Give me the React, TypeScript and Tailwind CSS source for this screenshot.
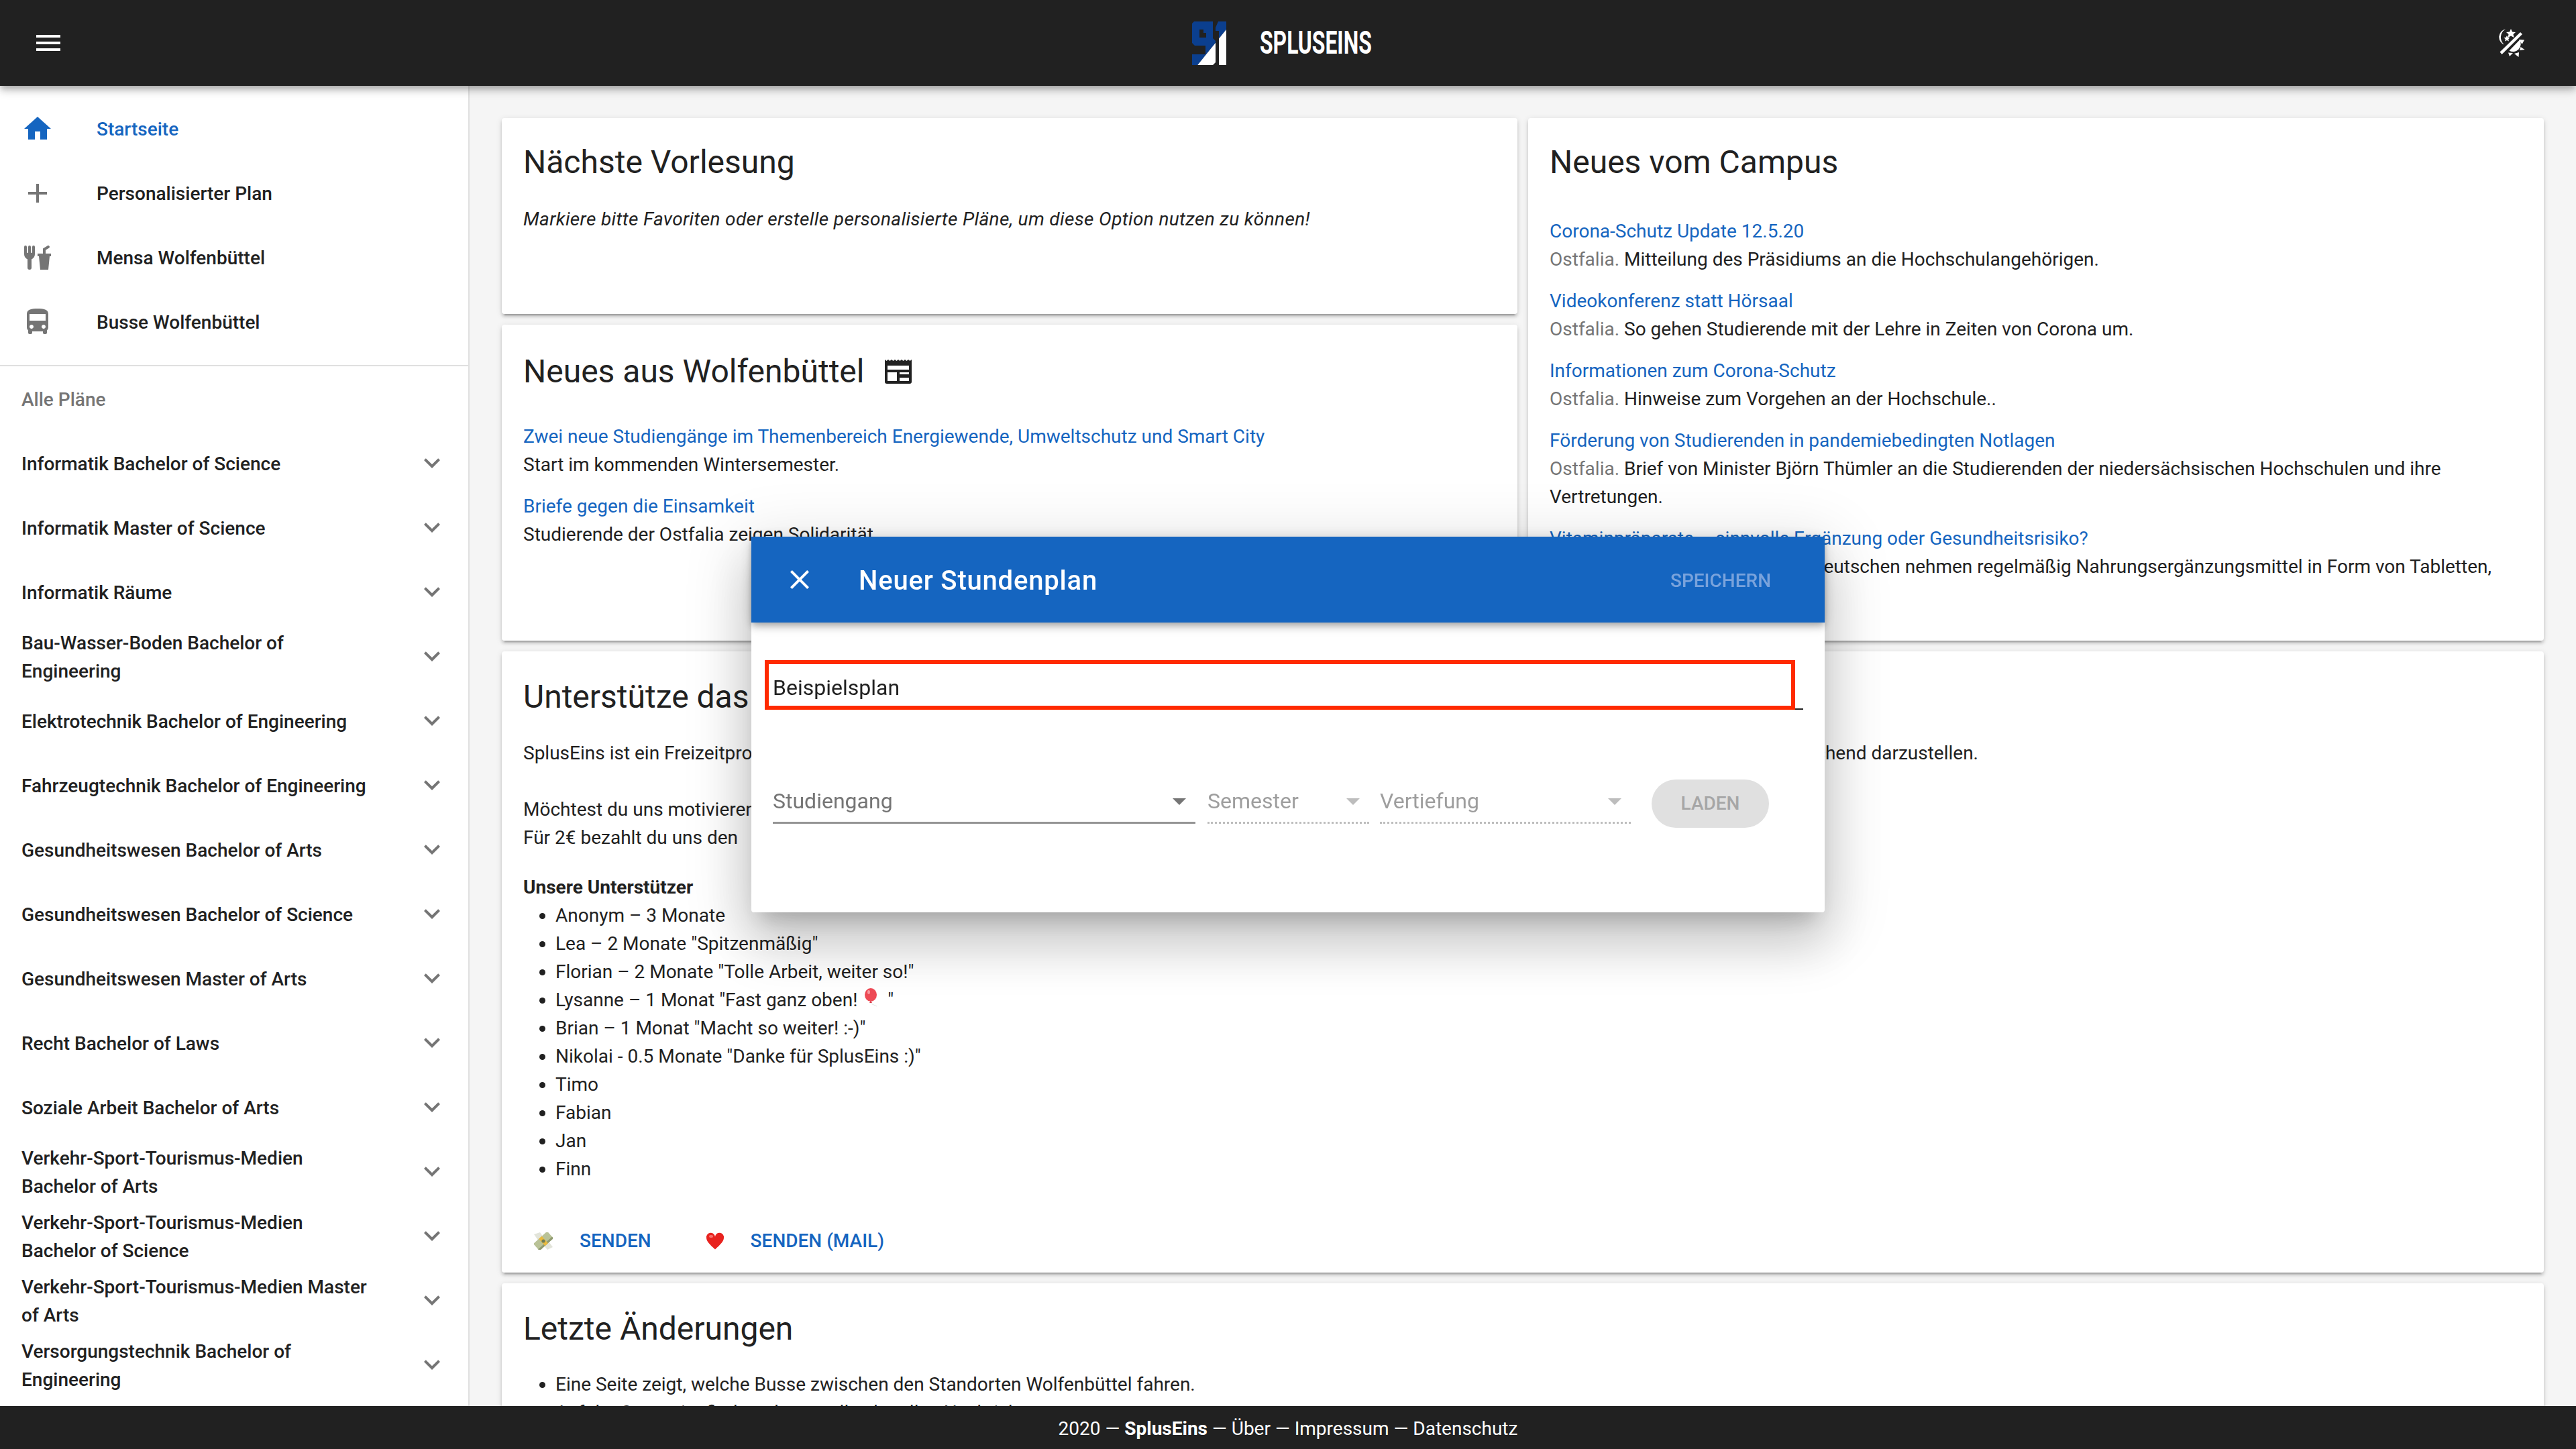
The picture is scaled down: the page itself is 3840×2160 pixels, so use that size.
const P = {
  menu: "M3 18h18v-2H3v2zm0-5h18v-2H3v2zm0-7v2h18V6H3z",
  home: "M10 20v-6h4v6h5v-8h3L12 3 2 12h3v8h5z",
  add: "M19 13h-6v6h-2v-6H5v-2h6V5h2v6h6v2z",
  food: "M3,3A1,1 0 0,0 2,4V8L2,9.5C2,11.19 3.03,12.62 4.5,13.22V19.5A1.5,1.5 0 0,0 6,21A1.5,1.5 0 0,0 7.5,19.5V13.22C8.97,12.62 10,11.19 10,9.5V8L10,4A1,1 0 0,0 9,3A1,1 0 0,0 8,4V8A0.5,0.5 0 0,1 7.5,8.5A0.5,0.5 0 0,1 7,8V4A1,1 0 0,0 6,3A1,1 0 0,0 5,4V8A0.5,0.5 0 0,1 4.5,8.5A0.5,0.5 0 0,1 4,8V4A1,1 0 0,0 3,3M19.88,3C19.75,3 19.62,3.09 19.5,3.16L16,5.25V9H12V11H13L14,21H20L21,11H22V9H18V6.34L20.5,4.84C21,4.56 21.13,4 20.84,3.5C20.63,3.14 20.26,2.95 19.88,3Z",
  bus: "M4 16c0 .88.39 1.67 1 2.22V20c0 .55.45 1 1 1h1c.55 0 1-.45 1-1v-1h8v1c0 .55.45 1 1 1h1c.55 0 1-.45 1-1v-1.78c.61-.55 1-1.34 1-2.22V6c0-3.5-3.58-4-8-4s-8 .5-8 4v10zm3.5 1c-.83 0-1.5-.67-1.5-1.5S6.67 14 7.5 14s1.5.67 1.5 1.5S8.33 17 7.5 17zm9 0c-.83 0-1.5-.67-1.5-1.5s.67-1.5 1.5-1.5 1.5.67 1.5 1.5-.67 1.5-1.5 1.5zm1.5-6H6V6h12v5z",
  down: "M7.41 8.59L12 13.17l4.59-4.58L18 10l-6 6-6-6 1.41-1.41z",
  close: "M19 6.41L17.59 5 12 10.59 6.41 5 5 6.41 10.59 12 5 17.59 6.41 19 12 13.41 17.59 19 19 17.59 13.41 12z",
  drop: "M7 10l5 5 5-5z",
};

function Icon({ d, className }: { d: string; className: string }) {
  return (
    <svg viewBox="0 0 24 24" className={className} fill="currentColor">
      <path d={d} />
    </svg>
  );
}

function Logo() {
  const nine = "M10 5H38V30L42 34V66L38 70H7V54H27V41H11L7 37V8zM18 17V29H28V22H24V17z";
  const one = "M46 5H58V70H47V19H42V14z";
  return (
    <svg viewBox="0 0 66 74" className="h-[74px] w-[66px]">
      <defs>
        <clipPath id="logo-white">
          <polygon points="62,12 62,74 12,74" />
        </clipPath>
      </defs>
      <path d={nine} fill="#0b3f8f" fillRule="evenodd" />
      <path d={one} fill="#0b3f8f" />
      <g clipPath="url(#logo-white)">
        <rect x="0" y="0" width="66" height="74" fill="#212121" />
        <path d={nine} fill="#ffffff" fillRule="evenodd" />
        <path d={one} fill="#ffffff" />
      </g>
    </svg>
  );
}

function ThemeIcon() {
  return (
    <svg viewBox="0 0 48 48" className="h-[48px] w-[48px]" fill="#ffffff">
      <path d="M15 3.5A12 12 0 0 0 13 26.5A14 14 0 0 1 15 3.5z" />
      <polygon points="23,3 25,7.5 30,8 26.5,11 27.5,16 23,13.5 18.5,16 19.500,11 16,8 21,7.5" />
      <polygon points="17,13 18.4,15.8 21.5,16.2 19.2,18.3 19.9,21.5 17,20 14.1,21.5 14.8,18.3 12.5,16.2 15.6,15.8" />
      <path d="M6.5 37.5L37 8l3 3L9.5 41z" />
      <path d="M36 19.5A11.5 11.5 0 0 1 20.5 35.5z" />
      <polygon points="35,19 43,19.5 39.5,26" />
      <polygon points="37.5,30 43.5,34 36,35" />
      <polygon points="19,38.5 26,39 21,44" />
      <polygon points="28,40 35,38 34.5,45" />
    </svg>
  );
}

function Newspaper() {
  return (
    <svg viewBox="0 0 40 36" className="ml-[31px] h-[36px] w-[40px]">
      <path
        d="M0 0l2.5 2 2.5-2 2.5 2 2.5-2 2.5 2 2.5-2 2.5 2 2.5-2 2.5 2 2.5-2 2.5 2 2.5-2 2.5 2 2.5-2 2.5 2 2.5-2V33a3 3 0 0 1-3 3H3a3 3 0 0 1-3-3z"
        fill="#212121"
      />
      <rect x="4" y="9" width="32" height="6" fill="#ffffff" />
      <rect x="4" y="19" width="14" height="13" fill="#ffffff" />
      <rect x="22" y="19" width="14" height="3" fill="#ffffff" />
      <rect x="22" y="27" width="14" height="5" fill="#ffffff" />
    </svg>
  );
}

function MoneyEmoji() {
  return (
    <svg viewBox="0 0 28 26" className="h-[26px] w-[28px]">
      <path d="M0 3l9-3 5 7-7 6zM15 20l7-6 6 8-8 4z" fill="#e2e4da" />
      <g transform="rotate(-42 14 13)">
        <rect x="0" y="6" width="28" height="14" rx="1" fill="#b9c297" />
        <rect x="0" y="17" width="28" height="3" fill="#8f9a70" />
        <rect x="11" y="6" width="6" height="14" fill="#e8b93e" />
      </g>
      <circle cx="14" cy="13" r="2.6" fill="#6e7d55" />
    </svg>
  );
}

function HeartEmoji() {
  return (
    <svg viewBox="0 0 28 26" className="h-[26px] w-[28px]">
      <path d="M14 25.500C6 18 1 13.500 1 8a6.500 6.500 0 0 1 13-1.500A6.500 6.500 0 0 1 27 8c0 5.500-5 10-13 17.500z" fill="#e8231f" />
      <ellipse cx="8" cy="6" rx="3" ry="2" fill="#f8716d" />
    </svg>
  );
}

function BalloonEmoji() {
  return (
    <svg viewBox="0 0 24 28" className="mr-[4px] ml-[10px] inline-block h-[28px] w-[24px] align-[-1px]">
      <ellipse cx="10" cy="10" rx="9" ry="10" fill="#ee4a55" />
      <ellipse cx="7" cy="6" rx="2" ry="3" fill="#f79aa0" />
      <polygon points="10,19 8,22 12,22" fill="#d63a45" />
      <path d="M10 22c2 3 6 3 9 5" stroke="#e3e3e3" strokeWidth="1" fill="none" />
    </svg>
  );
}

const top = [
  { label: "Startseite", d: P.home, active: true },
  { label: "Personalisierter Plan", d: P.add },
  { label: "Mensa Wolfenbüttel", d: P.food },
  { label: "Busse Wolfenbüttel", d: P.bus },
];

const plans = [
  "Informatik Bachelor of Science",
  "Informatik Master of Science",
  "Informatik Räume",
  "Bau-Wasser-Boden Bachelor of Engineering",
  "Elektrotechnik Bachelor of Engineering",
  "Fahrzeugtechnik Bachelor of Engineering",
  "Gesundheitswesen Bachelor of Arts",
  "Gesundheitswesen Bachelor of Science",
  "Gesundheitswesen Master of Arts",
  "Recht Bachelor of Laws",
  "Soziale Arbeit Bachelor of Arts",
  "Verkehr-Sport-Tourismus-Medien Bachelor of Arts",
  "Verkehr-Sport-Tourismus-Medien Bachelor of Science",
  "Verkehr-Sport-Tourismus-Medien Master of Arts",
  "Versorgungstechnik Bachelor of Engineering",
];

const campus = [
  ["Corona-Schutz Update 12.5.20", "Mitteilung des Präsidiums an die Hochschulangehörigen."],
  ["Videokonferenz statt Hörsaal", "So gehen Studierende mit der Lehre in Zeiten von Corona um."],
  ["Informationen zum Corona-Schutz", "Hinweise zum Vorgehen an der Hochschule.."],
  [
    "Förderung von Studierenden in pandemiebedingten Notlagen",
    "Brief von Minister Björn Thümler an die Studierenden der niedersächsischen Hochschulen und ihre Vertretungen.",
  ],
  [
    "Vitaminpräparate – sinnvolle Ergänzung oder Gesundheitsrisiko?",
    "Knapp ein Drittel aller\u00a0\u00a0Deutschen nehmen regelmäßig Nahrungsergänzungsmittel in Form von Tabletten, Pulver oder Kapseln.",
  ],
];

const cardClass =
  "overflow-hidden rounded-[4px] bg-white p-[32px] shadow-[0_6px_2px_-4px_rgba(0,0,0,0.2),0_4px_4px_0_rgba(0,0,0,0.14),0_2px_10px_0_rgba(0,0,0,0.12)]";

export default function App() {
  return (
    <div className="relative flex h-[2160px] w-[3840px] flex-col overflow-hidden bg-[#f5f5f5] font-[Roboto,sans-serif] text-[28px] leading-[42px] text-[#212121]">
      <header className="relative z-10 flex h-[128px] shrink-0 items-center justify-between bg-[#212121] pr-[72px] pl-[48px] text-white shadow-[0_4px_8px_-2px_rgba(0,0,0,0.2),0_8px_10px_0_rgba(0,0,0,0.14),0_2px_20px_0_rgba(0,0,0,0.12)]">
        <Icon d={P.menu} className="h-[48px] w-[48px]" />
        <div className="flex items-center">
          <Logo />
          <span className="ml-[42px] w-[168px] origin-left scale-x-[0.65] text-[49px] leading-[50px] font-bold whitespace-nowrap">
            SPLUSEINS
          </span>
        </div>
        <ThemeIcon />
      </header>

      <div className="flex min-h-0 flex-1">
        <aside className="w-[700px] shrink-0 overflow-hidden border-r-2 border-[#e0e0e0] bg-white font-medium">
          <div className="border-b-2 border-[#e0e0e0] py-[16px]">
            {top.map((t) => (
              <div key={t.label} className={`flex h-[96px] items-center px-[32px] ${t.active ? "text-[#1565c0]" : ""}`}>
                <Icon d={t.d} className={`mr-[64px] h-[48px] w-[48px] shrink-0 ${t.active ? "text-[#1565c0]" : "text-[#757575]"}`} />
                <span className="pt-[2px]">{t.label}</span>
              </div>
            ))}
          </div>
          <div className="flex h-[96px] items-center px-[32px] pt-[4px] text-[#757575]">Alle Pläne</div>
          {plans.map((p) => (
            <div key={p} className="flex h-[96px] items-center justify-between pr-[30px] pl-[32px]">
              <span className="w-[530px] pt-[4px]">{p}</span>
              <Icon d={P.down} className="h-[48px] w-[48px] shrink-0 text-[#757575]" />
            </div>
          ))}
        </aside>

        <main className="min-w-0 flex-1 overflow-hidden p-[48px]">
          <div className="grid grid-cols-2 grid-rows-[292px_471px_926px_auto] gap-[16px]">
            <section className={cardClass}>
              <h2 className="mt-[2px] mb-[32px] text-[48px] leading-[64px]">Nächste Vorlesung</h2>
              <p className="tracking-[0.36px] italic">
                Markiere bitte Favoriten oder erstelle personalisierte Pläne, um diese Option nutzen zu können!
              </p>
            </section>

            <section className={`${cardClass} row-span-2`}>
              <h2 className="mt-[2px] mb-[50px] text-[48px] leading-[64px]">Neues vom Campus</h2>
              {campus.map(([title, text]) => (
                <div key={title} className="mb-[20px]">
                  <div className="text-[#1565c0]">{title}</div>
                  <div>
                    <span className="text-[#757575]">Ostfalia.</span> {text}
                  </div>
                </div>
              ))}
            </section>

            <section className={cardClass}>
              <h2 className="mt-[6px] mb-[44px] flex items-center text-[48px] leading-[64px]">
                Neues aus Wolfenbüttel
                <Newspaper />
              </h2>
              <div className="mb-[20px]">
                <div className="text-[#1565c0]">
                  Zwei neue Studiengänge im Themenbereich Energiewende, Umweltschutz und Smart City
                </div>
                <div>Start im kommenden Wintersemester.</div>
              </div>
              <div className="text-[#1565c0]">Briefe gegen die Einsamkeit</div>
              <div>Studierende der Ostfalia zeigen Solidarität</div>
            </section>

            <section className={`${cardClass} col-span-2`}>
              <h2 className="mt-[4px] mb-[31px] text-[48px] leading-[64px]">Unterstütze das Projekt</h2>
              <p className="mb-[42px]">
                SplusEins ist ein Freizeitprojekt von Studierenden der Ostfalia. Wir arbeiten daran, die Stundenpläne der Hochschule hier für alle übersichtlich und so ansprechend darzustellen.
              </p>
              <p className="mb-[32px]">
                Möchtest du uns motivieren, weiterzumachen?
                <br />
                Für 2€ bezahlt du uns den&nbsp;&nbsp;&nbsp;nächsten Kaffee.
              </p>
              <div className="font-bold">Unsere Unterstützer</div>
              <ul className="list-disc pl-[48px]">
                <li>Anonym – 3 Monate</li>
                <li>Lea – 2 Monate "Spitzenmäßig"</li>
                <li>Florian – 2 Monate "Tolle Arbeit, weiter so!"</li>
                <li>
                  Lysanne – 1 Monat "Fast ganz oben!
                  <BalloonEmoji /> "
                </li>
                <li>Brian – 1 Monat "Macht so weiter! :-)"</li>
                <li>Nikolai - 0.5 Monate "Danke für SplusEins :)"</li>
                <li>Timo</li>
                <li>Fabian</li>
                <li>Jan</li>
                <li>Finn</li>
              </ul>
              <div className="mt-[65px] flex items-center pl-[16px] font-medium text-[#1565c0]">
                <MoneyEmoji />
                <span className="ml-[40px]">SENDEN</span>
                <span className="ml-[81px]">
                  <HeartEmoji />
                </span>
                <span className="ml-[39px]">SENDEN (MAIL)</span>
              </div>
            </section>

            <section className={`${cardClass} col-span-2`}>
              <h2 className="mt-[4px] mb-[30px] text-[48px] leading-[64px]">Letzte Änderungen</h2>
              <ul className="list-disc pl-[48px]">
                <li>Eine Seite zeigt, welche Busse zwischen den Standorten Wolfenbüttel fahren.</li>
                <li>Auf der Startseite findest du nun alle aktuellen Nachrichten.</li>
              </ul>
            </section>
          </div>
        </main>
      </div>

      <footer className="relative z-10 flex h-[64px] shrink-0 items-center justify-center bg-[#212121] pt-[4px] text-white">
        <span>
          2020 — <span className="font-bold">SplusEins</span> — Über — Impressum — Datenschutz
        </span>
      </footer>

      <div className="fixed inset-0 z-20 flex items-center justify-center">
        <div className="flex h-[560px] w-[1600px] flex-col rounded-[4px] bg-white shadow-[0_22px_30px_-14px_rgba(0,0,0,0.2),0_48px_76px_6px_rgba(0,0,0,0.14),0_18px_92px_16px_rgba(0,0,0,0.12)]">
          <div className="flex h-[128px] shrink-0 items-center justify-between bg-[#1565c0] pr-[80px] pl-[48px] text-white shadow-[0_4px_8px_-2px_rgba(0,0,0,0.2),0_8px_10px_0_rgba(0,0,0,0.14),0_2px_20px_0_rgba(0,0,0,0.12)]">
            <div className="flex items-center">
              <Icon d={P.close} className="h-[48px] w-[48px]" />
              <span className="mt-[4px] ml-[64px] text-[40px] font-medium tracking-[0.8px]">Neuer Stundenplan</span>
            </div>
            <span className="mt-[4px] font-medium text-[#7aa3dc]">SPEICHERN</span>
          </div>

          <div className="relative mx-[32px] mt-[56px] h-[74px] border-b-2 border-[#212121]">
            <div className="flex h-[72px] items-center pt-[10px] text-[32px]">Beispielsplan</div>
            <div className="absolute top-0 -left-[12px] h-[74px] w-[1536px] border-[6px] border-[#ff2a00]" />
          </div>

          <div className="mx-[32px] mt-[100px] flex items-end">
            <div className="mr-[18px] flex h-[70px] w-[630px] items-center justify-between border-b-[3px] border-[#949494] pt-[4px] text-[32px] text-[#757575]">
              Studiengang
              <Icon d={P.drop} className="h-[48px] w-[48px] text-[#757575]" />
            </div>
            <div className="mr-[16px] flex h-[70px] w-[241px] items-center justify-between border-b-[3px] border-dotted border-[#bdbdbd] pt-[4px] text-[32px] text-[#9e9e9e]">
              Semester
              <Icon d={P.drop} className="h-[48px] w-[48px] text-[#bdbdbd]" />
            </div>
            <div className="flex h-[70px] w-[374px] items-center justify-between border-b-[3px] border-dotted border-[#bdbdbd] pt-[4px] text-[32px] text-[#9e9e9e]">
              Vertiefung
              <Icon d={P.drop} className="h-[48px] w-[48px] text-[#bdbdbd]" />
            </div>
            <div className="mb-[-6px] ml-[31px] flex h-[72px] w-[175px] items-center justify-center rounded-full bg-[#e0e0e0] font-medium text-[#a6a6a6]">
              LADEN
            </div>
          </div>
        </div>
      </div>
    </div>
  );
}
